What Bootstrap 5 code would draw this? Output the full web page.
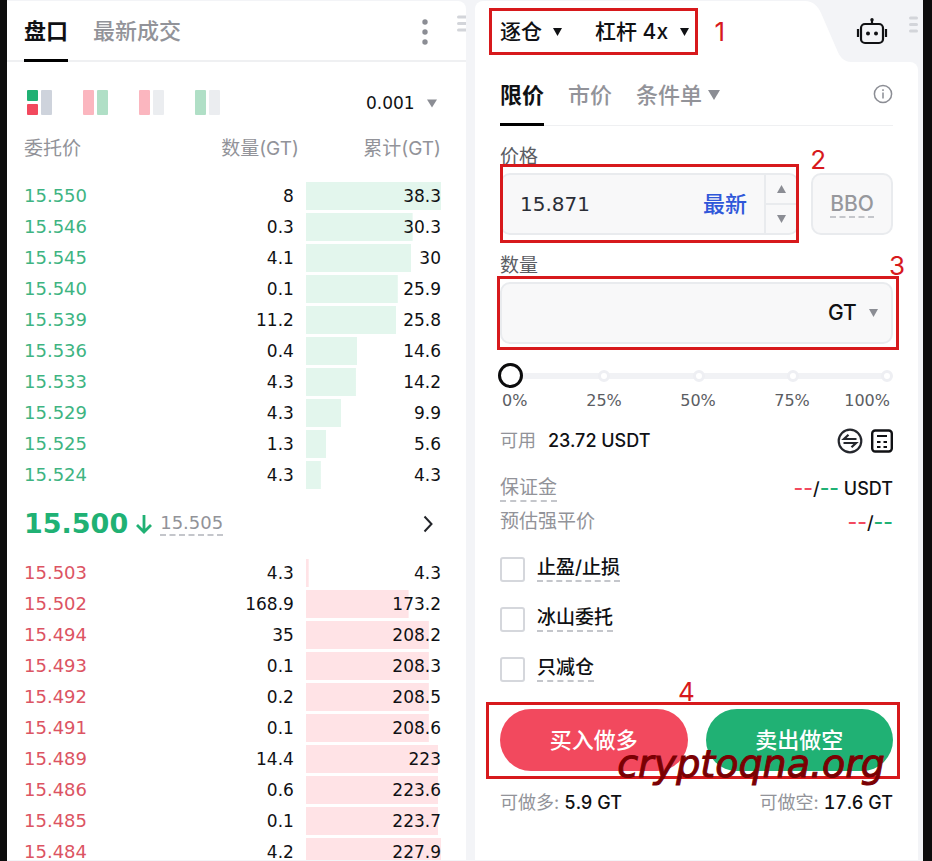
<!DOCTYPE html>
<html lang="zh-CN">
<head>
<meta charset="utf-8">
<meta name="viewport" content="width=device-width, initial-scale=1">
<title>合约交易</title>
<link href="https://cdn.jsdelivr.net/npm/bootstrap@5.3.0/dist/css/bootstrap.min.css" rel="stylesheet">
<style>
:root { --up: #20b174; --down: #f2495e; --muted: #929399; --line: #e9ebee; --ink: #101114; --note: #d7191c; }
body { background: #0d0d0d; color: var(--ink); font-family: Inter, "Noto Sans CJK SC", sans-serif; font-size: 18px; line-height: 24px; }
button, select, input { font: inherit; color: inherit; }
.frame { background: #0d0d0d; padding: 0 9px 0 7px; }
.workspace { background: #f3f4f7; display: grid; grid-template-columns: 459fr 443fr; gap: 9px; padding: 1px 5px 1px 0; }
.pane { min-width: 0; overflow: hidden; }
.book-pane { background: #fff; border-radius: 0 8px 0 0; }
.digits { font-family: "DejaVu Sans", "Noto Sans CJK SC", sans-serif; }
.dashed { border-bottom: 2px dashed #c4c6cb; text-decoration: none; color: inherit; }
.muted { color: var(--muted); }
.up { color: var(--up); }
.down { color: var(--down); }
.cjk { font-size: 19px; }
.plain { background: none; border: 0; padding: 0; appearance: none; outline-offset: 2px; cursor: pointer; }

.tab-bar { border-bottom: 2px solid #eff0f2; }
.tab-btn { font-size: 22px; line-height: 30px; color: var(--muted); font-weight: 500; border-bottom: 3px solid transparent; }
.tab-btn.active { color: var(--ink); font-weight: 700; border-color: #000; }
.book-tabs { height: 61px; padding: 0 0 0 17px; gap: 25px; }
.book-tabs .tab-btn { padding: 14px 0 13px; margin-bottom: -2px; }
.kebab { width: 6px; margin-right: 29px; margin-top: 4px; }
.grip { width: 9px; margin-bottom: 15px; }

.book-body { padding: 24px 25px 0 17px; }
.book-tools { height: 34px; gap: 30px; padding: 0 4px 0 2px; }
.precision { font-size: 17px; }
.book-table { width: 100%; table-layout: fixed; border-collapse: separate; border-spacing: 0 3px; }
.book-table th { height: 56px; padding: 0 0 5px; font-weight: 400; color: var(--muted); }
.book-table th:nth-child(2) { padding-right: 7px; }
.book-table td { height: 28px; padding: 0; font-family: "DejaVu Sans", sans-serif; font-size: 17px; }
.book-table td:nth-child(2) { padding-right: 12px; }
.book-table td:nth-child(3) { background-size: var(--depth) 100%; background-repeat: no-repeat; }
.book-table .price { font-size: 18px; }
.col-total { width: 32.4%; }
.col-price { width: 30%; }
.greens .price { color: #3eb482; }
.reds .price { color: #dc5463; }
.greens td:nth-child(3) { background-image: linear-gradient(#e3f6ed, #e3f6ed); }
.reds td:nth-child(3) { background-image: linear-gradient(#ffe3e6, #ffe3e6); }
.book-table .last-row td { height: 64px; }
.last-price { font-size: 27px; font-weight: 700; }
.mark-price { font-size: 18px; line-height: 22px; color: var(--muted); }

.order-head { height: 61px; }
.head-main { background: #fff; border-radius: 8px 0 0 0; padding-left: 25px; }
.head-curve { width: 46px; height: 61px; }
.head-side { width: 67px; padding-left: 5px; }
.mode-box { gap: 33px; height: 47px; }
.mode-box label { font-size: 21px; font-weight: 500; gap: 11px; }
.order-body { background: #fff; border-radius: 0 8px 0 0; padding: 0 25px; }
.order-tabs { height: 64px; gap: 24px; border-bottom-width: 1px; }
.order-tabs .tab-btn { padding: 15px 0 13px; margin-bottom: -1px; }
.order-tabs .cond { gap: 6px; }

.field-label { line-height: 20px; margin: 21px 0 6px; color: #5b5d63; font-weight: 400; }
.field { height: 62px; background: #f8f8f9; border: 2px solid var(--line); border-radius: 10px; }
.field input { background: transparent; border: 0; min-width: 0; outline-offset: -4px; }
.price-row { gap: 12px; }
.price-row .field { min-width: 0; }
.price-input { font-size: 20px; padding: 0 0 0 18px; color: #2b2e36; }
.latest { font-size: 22px; font-weight: 500; color: #2f57d9; padding: 0 17px; }
.stepper { width: 33px; border-left: 2px solid var(--line); }
.stepper button + button { border-top: 2px solid var(--line); }
.bbo { width: 82px; font-size: 21px; font-weight: 500; color: #97989d; }
.unit { font-size: 21px; font-weight: 500; gap: 12px; padding-right: 13px; }

.slider { height: 25px; margin: 19px -6px 0 -2px; }
.slider-rail { inset: 10px 12px auto; height: 6px; background: #f1f2f5; }
.slider-rail i { width: 12px; height: 12px; border: 3px solid #eeeff3; background: #fff; border-radius: 50%; margin: -3px -6px 0; }
.slider input { appearance: none; background: transparent; width: 100%; height: 25px; margin: 0; }
.slider input::-webkit-slider-thumb { appearance: none; width: 25px; height: 25px; border: 3px solid #0b0b0c; background: #fff; border-radius: 50%; }
.slider-scale { display: grid; grid-template-columns: 55fr 94fr 94fr 94fr 51fr; padding: 0 3px 0 2px; margin-top: 3px; font-size: 16px; line-height: 20px; color: #5b5d63; text-align: center; }
.avail { height: 28px; margin-top: 16px; }
.figures { font-weight: 500; }
.dashes { font-size: 21px; }
.caps .figures { font-variant-numeric: tabular-nums; }
.info-rows { display: grid; gap: 8px; margin: 21px 0; }
.options { display: grid; gap: 24px; }
.options .form-check-input { width: 25px; height: 25px; margin: 0; border: 2px solid #d5d7dc; border-radius: 3px; }
.options label { line-height: 24px; font-weight: 500; gap: 12px; }
.actions { margin-top: 27px; gap: 18px; }
.actions .btn { height: 62px; font-size: 22px; font-weight: 500; color: #fff; border: 0; }
.buy { background: var(--down); }
.sell { background: var(--up); }
.caps { margin-top: 20px; }

/* Tutorial annotations over the controls */
.note-frame { border: 3px solid var(--note); pointer-events: none; z-index: 2; }
.note-num { color: var(--note); font-size: 26px; line-height: 26px; z-index: 3; pointer-events: none; }
.n1 .note-frame { inset: 0 -9px 0 -11px; }
.n1 .note-num { top: 11px; right: -36px; }
.n2 .note-frame { inset: -9px 0 -8px; }
.n2 .note-num { top: -26px; right: -27px; }
.n3 .note-frame { inset: -6px -6px -6px -3px; }
.n3 .note-num { top: -29px; right: -12px; }
.n4 .note-frame { inset: -7px -7px -8px -14px; }
.n4 .note-num { top: -30px; left: 178px; }
.watermark { right: 8px; bottom: -15px; font: italic 38px/44px "DejaVu Sans", sans-serif; color: #7b0003; -webkit-text-stroke: 1px #7b0003; z-index: 4; pointer-events: none; }
</style>
</head>
<body>
<div class="frame vh-100 overflow-hidden">
<main class="workspace h-100">

<section class="pane book-pane" aria-label="盘口">
  <div class="tab-bar book-tabs d-flex align-items-end">
    <button class="plain tab-btn active" type="button">盘口</button>
    <button class="plain tab-btn" type="button">最新成交</button>
    <button class="plain ms-auto align-self-center d-flex" type="button" aria-label="更多"><svg class="kebab" height="26" viewBox="0 0 6 26" fill="#8b8d94"><circle cx="3" cy="3" r="2.7"/><circle cx="3" cy="13" r="2.7"/><circle cx="3" cy="23" r="2.7"/></svg><svg class="grip" height="17" viewBox="0 0 9 17" stroke="#d3d5da" stroke-width="3" stroke-linecap="round"><path d="M1.500 2H10M1.500 8.500H10M1.500 15H10"/></svg></button>
  </div>
  <div class="book-body">
    <div class="book-tools d-flex align-items-center">
      <button class="plain d-flex" type="button" aria-label="默认"><svg width="26" height="26"><rect x="1" width="11" height="11" rx="1" fill="#20b174"/><rect x="1" y="14" width="11" height="11" rx="1" fill="#f2495e"/><rect x="15" width="11" height="25" rx="1" fill="#ced3dc"/></svg></button>
      <button class="plain d-flex" type="button" aria-label="左右"><svg width="26" height="26"><rect x="1" width="11" height="25" rx="1" fill="#fbb6bf"/><rect x="15" width="11" height="25" rx="1" fill="#b0dfc6"/></svg></button>
      <button class="plain d-flex" type="button" aria-label="卖盘"><svg width="26" height="26"><rect x="1" width="11" height="25" rx="1" fill="#fbb6bf"/><rect x="15" width="11" height="25" rx="1" fill="#ebedf0"/></svg></button>
      <button class="plain d-flex" type="button" aria-label="买盘"><svg width="26" height="26"><rect x="1" width="11" height="25" rx="1" fill="#b0dfc6"/><rect x="15" width="11" height="25" rx="1" fill="#ebedf0"/></svg></button>
      <label class="precision d-flex align-items-center gap-2 ms-auto"><select class="plain digits" aria-label="精度"><option>0.001</option></select><svg class="ms-1" width="10" height="9" fill="#8b8d94"><path d="M0 0.500H10L5 8.500Z"/></svg></label>
    </div>
    <table class="book-table">
      <colgroup><col class="col-price"><col><col class="col-total"></colgroup>
      <thead><tr><th class="cjk">委托价</th><th class="cjk text-end">数量(GT)</th><th class="cjk text-end">累计(GT)</th></tr></thead>
      <tbody class="greens text-end">
        <tr><td class="price text-start">15.550</td><td>8</td><td style="--depth:100%">38.3</td></tr>
        <tr><td class="price text-start">15.546</td><td>0.3</td><td style="--depth:79%">30.3</td></tr>
        <tr><td class="price text-start">15.545</td><td>4.1</td><td style="--depth:78%">30</td></tr>
        <tr><td class="price text-start">15.540</td><td>0.1</td><td style="--depth:68%">25.9</td></tr>
        <tr><td class="price text-start">15.539</td><td>11.2</td><td style="--depth:67%">25.8</td></tr>
        <tr><td class="price text-start">15.536</td><td>0.4</td><td style="--depth:38%">14.6</td></tr>
        <tr><td class="price text-start">15.533</td><td>4.3</td><td style="--depth:37%">14.2</td></tr>
        <tr><td class="price text-start">15.529</td><td>4.3</td><td style="--depth:26%">9.9</td></tr>
        <tr><td class="price text-start">15.525</td><td>1.3</td><td style="--depth:15%">5.6</td></tr>
        <tr><td class="price text-start">15.524</td><td>4.3</td><td style="--depth:11%">4.3</td></tr>
      </tbody>
      <tbody class="last-row">
        <tr><td colspan="3"><div class="d-flex align-items-center"><span class="last-price up">15.500</span><svg class="mx-2" width="16" height="22" viewBox="0 0 16 22" fill="none" stroke="#20b174" stroke-width="2.800"><path d="M8 2V19M1 12L8 19L15 12"/></svg><a class="dashed mark-price muted" href="#">15.505</a><button class="plain ms-auto me-2 d-flex" type="button" aria-label="展开"><svg width="10" height="18" fill="none" stroke="#222429" stroke-width="2"><path d="M1.500 1.500L8.500 9L1.500 16.500"/></svg></button></div></td></tr>
      </tbody>
      <tbody class="reds text-end">
        <tr><td class="price text-start">15.503</td><td>4.3</td><td style="--depth:2%">4.3</td></tr>
        <tr><td class="price text-start">15.502</td><td>168.9</td><td style="--depth:76%">173.2</td></tr>
        <tr><td class="price text-start">15.494</td><td>35</td><td style="--depth:91%">208.2</td></tr>
        <tr><td class="price text-start">15.493</td><td>0.1</td><td style="--depth:91%">208.3</td></tr>
        <tr><td class="price text-start">15.492</td><td>0.2</td><td style="--depth:91%">208.5</td></tr>
        <tr><td class="price text-start">15.491</td><td>0.1</td><td style="--depth:91%">208.6</td></tr>
        <tr><td class="price text-start">15.489</td><td>14.4</td><td style="--depth:98%">223</td></tr>
        <tr><td class="price text-start">15.486</td><td>0.6</td><td style="--depth:98%">223.6</td></tr>
        <tr><td class="price text-start">15.485</td><td>0.1</td><td style="--depth:98%">223.7</td></tr>
        <tr><td class="price text-start">15.484</td><td>4.2</td><td style="--depth:100%">227.9</td></tr>
      </tbody>
    </table>
  </div>
</section>

<section class="pane d-flex flex-column" aria-label="下单">
  <header class="order-head d-flex flex-shrink-0">
    <div class="head-main flex-grow-1 d-flex align-items-center">
      <div class="mode-box n1 position-relative d-flex align-items-center">
        <label class="d-flex align-items-center"><select class="plain" aria-label="保证金模式"><option>逐仓</option></select><svg width="9" height="8"><path d="M0 0H9L4.500 8Z" fill="#101114"/></svg></label>
        <label class="d-flex align-items-center"><select class="plain" aria-label="杠杆"><option>杠杆 4x</option></select><svg width="9" height="8"><path d="M0 0H9L4.500 8Z" fill="#101114"/></svg></label>
        <span class="note-frame position-absolute"></span><span class="note-num position-absolute">1</span>
      </div>
    </div>
    <svg class="head-curve flex-shrink-0" viewBox="0 0 46 61" fill="#fff"><path d="M0 0C8 0 13 5 16 12L32 49C35 57 40 61 46 61H0Z"/></svg>
    <div class="head-side flex-shrink-0 d-flex align-items-center">
      <button class="plain d-flex" type="button" aria-label="交易机器人"><svg width="32" height="28" viewBox="0 0 32 28" fill="none" stroke="#101114" stroke-width="2.200"><rect x="5" y="6" width="22" height="19" rx="4"/><path d="M16 6V2M2 11V19M30 11V19"/><circle cx="16" cy="1.700" r="1.700" fill="#101114" stroke="none"/><circle cx="12" cy="15.500" r="2" fill="#101114" stroke="none"/><circle cx="20" cy="15.500" r="2" fill="#101114" stroke="none"/></svg></button>
      <svg class="grip ms-auto" height="17" viewBox="0 0 9 17" stroke="#d3d5da" stroke-width="3" stroke-linecap="round"><path d="M1.500 2H7.500M1.500 8.500H7.500M1.500 15H7.500"/></svg>
    </div>
  </header>
  <div class="order-body flex-grow-1">
    <div class="tab-bar order-tabs d-flex align-items-end">
      <button class="plain tab-btn active" type="button">限价</button>
      <button class="plain tab-btn" type="button">市价</button>
      <button class="plain tab-btn cond d-flex align-items-center" type="button">条件单<svg width="12" height="10" fill="#8b8d94"><path d="M0 0H12L6 10Z"/></svg></button>
      <button class="plain ms-auto align-self-center d-flex" type="button" aria-label="说明"><svg width="20" height="20" fill="none" stroke="#8b8d94" stroke-width="1.500"><circle cx="10" cy="10" r="8.600"/><path d="M10 8.500V14.500M10 5.300V7"/></svg></button>
    </div>

    <label class="field-label cjk d-block" for="price">价格</label>
    <div class="price-row d-flex">
      <div class="n2 position-relative flex-grow-1">
        <div class="field d-flex">
          <input class="price-input digits flex-grow-1 w-50" id="price" type="text" value="15.871">
          <button class="plain latest" type="button">最新</button>
          <div class="stepper d-flex flex-column">
            <button class="plain flex-fill" type="button" aria-label="加"><svg class="d-block mx-auto" width="9" height="8" fill="#8b8d94"><path d="M0 8H9L4.500 0Z"/></svg></button>
            <button class="plain flex-fill" type="button" aria-label="减"><svg class="d-block mx-auto" width="9" height="8" fill="#8b8d94"><path d="M0 0H9L4.500 8Z"/></svg></button>
          </div>
        </div>
        <span class="note-frame position-absolute"></span><span class="note-num position-absolute">2</span>
      </div>
      <button class="field bbo p-0 flex-shrink-0" type="button"><span class="dashed">BBO</span></button>
    </div>

    <label class="field-label cjk d-block" for="amount">数量</label>
    <div class="n3 position-relative">
      <div class="field d-flex align-items-center">
        <input class="flex-grow-1 h-100 px-3" id="amount" type="text">
        <label class="unit d-flex align-items-center"><select class="plain" aria-label="单位"><option>GT</option></select><svg width="9" height="8" fill="#8b8d94"><path d="M0 0H9L4.500 8Z"/></svg></label>
      </div>
      <span class="note-frame position-absolute"></span><span class="note-num position-absolute">3</span>
    </div>

    <div class="slider position-relative">
      <div class="slider-rail position-absolute d-flex justify-content-between"><i></i><i></i><i></i><i></i><i></i></div>
      <input class="position-relative d-block" type="range" min="0" max="100" value="0" aria-label="仓位比例">
    </div>
    <div class="slider-scale digits"><span class="text-start">0%</span><span>25%</span><span>50%</span><span>75%</span><span class="text-end">100%</span></div>

    <div class="avail d-flex align-items-center">
      <span class="muted me-2">可用</span><span class="figures ms-1">23.72 USDT</span>
      <button class="plain ms-auto d-flex" type="button" aria-label="划转"><svg width="26" height="26" viewBox="0 0 26 26" fill="none" stroke="#25272d" stroke-width="2.200"><circle cx="13" cy="13" r="11.300"/><path d="M19.500 11H7L11.500 6.800M6.500 15H19L14.500 19.200"/></svg></button>
      <button class="plain ms-2 d-flex" type="button" aria-label="计算器"><svg width="22" height="24" viewBox="0 0 22 24" fill="none" stroke="#101114" stroke-width="2.400"><rect x="1.200" y="1.500" width="19.600" height="21" rx="3"/><path d="M6 7H16M6 13H9.500M12.500 13H16M6 18H9.500M12.500 18H16" stroke-width="2.200"/></svg></button>
    </div>
    <div class="info-rows">
      <div class="d-flex justify-content-between"><a class="dashed muted cjk" href="#">保证金</a><span class="figures"><span class="down dashes">--</span>/<span class="up dashes">--</span> USDT</span></div>
      <div class="d-flex justify-content-between"><span class="muted cjk">预估强平价</span><span class="figures"><span class="down dashes">--</span>/<span class="up dashes">--</span></span></div>
    </div>

    <div class="options">
      <label class="d-flex align-items-center"><input class="form-check-input" type="checkbox"><span class="dashed cjk">止盈/止损</span></label>
      <label class="d-flex align-items-center"><input class="form-check-input" type="checkbox"><span class="dashed cjk">冰山委托</span></label>
      <label class="d-flex align-items-center"><input class="form-check-input" type="checkbox"><span class="dashed cjk">只减仓</span></label>
    </div>

    <div class="actions n4 position-relative d-flex">
      <button class="btn buy rounded-pill flex-fill" type="button">买入做多</button>
      <button class="btn sell rounded-pill flex-fill" type="button">卖出做空</button>
      <span class="note-frame position-absolute"></span><span class="note-num position-absolute">4</span>
      <span class="watermark position-absolute">cryptoqna.org</span>
    </div>
    <div class="caps d-flex justify-content-between">
      <span><span class="muted">可做多:</span> <span class="figures">5.9 GT</span></span>
      <span><span class="muted">可做空:</span> <span class="figures">17.6 GT</span></span>
    </div>
  </div>
</section>

</main>
</div>
<script src="https://cdn.jsdelivr.net/npm/bootstrap@5.3.0/dist/js/bootstrap.bundle.min.js"></script>
</body>
</html>
